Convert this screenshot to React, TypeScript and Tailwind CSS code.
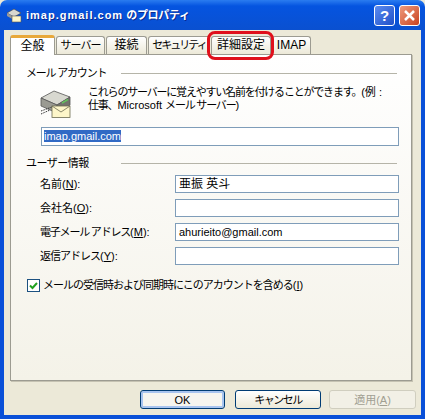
const font = '"Liberation Sans", "Noto Sans CJK JP", sans-serif';

const tabs = [
  { label: "サーバー", cls: "w-[49px] text-[11px] tracking-[-1px]" },
  { label: "接続", cls: "w-[41px] text-[12px]" },
  { label: "セキュリティ", cls: "w-[62px] text-[11px] tracking-[-2px]" },
  { label: "詳細設定", cls: "w-[60px] text-[12px]" },
  { label: "IMAP", cls: "w-[39px] text-[12px]" },
];

function MailServerIcon() {
  return (
    <svg width="32" height="32" viewBox="0 0 32 32" className="shrink-0">
      <path d="M1 12 L14 5 L30 11 L17 19 Z" fill="#d8d8d0" stroke="#555" strokeWidth="0.8" />
      <path d="M1 12 L17 19 L17 27 L1 20 Z" fill="#9a9a92" stroke="#555" strokeWidth="0.8" />
      <path d="M17 19 L30 11 L30 19 L17 27 Z" fill="#73736d" stroke="#555" strokeWidth="0.8" />
      <path d="M22 17 L28 13.500" stroke="#62c15c" strokeWidth="1.500" />
      <path d="M1 25 L12 21" stroke="#333" strokeWidth="1" strokeDasharray="1.500 1" />
      <path d="M1 28 L10 24" stroke="#333" strokeWidth="1" strokeDasharray="1.500 1" />
      <rect x="12" y="20" width="18" height="11.500" fill="#fdf6c9" stroke="#6b6b50" strokeWidth="0.8" />
      <path d="M12 20 L21 26 L30 20" fill="none" stroke="#6b6b50" strokeWidth="0.8" />
    </svg>
  );
}

function GroupTitle({ children, cls }: { children: string; cls: string }) {
  return (
    <div className="flex items-center h-[14px] pr-[2px]">
      <span className={`w-[95px] text-[11px] leading-[14px] whitespace-nowrap ${cls}`}>{children}</span>
      <div className="flex-1 h-[1px] bg-[#b5b4a8]" />
    </div>
  );
}

function Field({ label, hot, value, valueCls = "text-[11px]", labelCls = "" }: { label: string; hot: string; value?: string; valueCls?: string; labelCls?: string }) {
  return (
    <div className="flex items-center h-[18px]">
      <span className="w-[149px] pl-[14px] text-[11px] whitespace-nowrap">
        <span className={labelCls}>{label}</span>(<span className="underline">{hot}</span>):
      </span>
      <div className={`flex-1 h-[18px] bg-white border border-[#7f9db9] px-[3px] leading-[16px] whitespace-nowrap overflow-hidden ${valueCls}`}>
        {value}
      </div>
    </div>
  );
}

export default function App() {
  return (
    <div className="w-[425px] h-[419px] relative overflow-hidden bg-[#ece9d8] text-black flex flex-col" style={{ fontFamily: font }}>
      {/* タイトルバー */}
      <div className="h-[30px] shrink-0 flex items-center pl-[6px] pr-[5px] gap-[4px] rounded-t-[7px] bg-gradient-to-b from-[#2a7cf0] via-[#0554e0] via-20% to-[#0a50d0]">
        <svg width="16" height="16" viewBox="0 0 16 16" className="shrink-0">
          <path d="M1 6 L8 2 L15 6 L8 10 Z" fill="#d8d8d0" stroke="#444" strokeWidth="0.6" />
          <path d="M1 6 L8 10 L8 13 L1 9 Z" fill="#999" />
          <rect x="6" y="9" width="9" height="6" fill="#fdf6c9" stroke="#555" strokeWidth="0.6" />
        </svg>
        <span className="flex-1 text-white font-bold text-[11px] whitespace-nowrap [text-shadow:1px_1px_0_#0a2a90]">
          <span className="tracking-[1px]">imap.gmail.com</span> <span className="tracking-[-0.3px]">のプロパティ</span>
        </span>
        <div className="w-[21px] h-[21px] rounded-[3px] border border-white bg-gradient-to-br from-[#5c8cf0] to-[#1f4fc8] text-white font-bold text-[15px] leading-[19px] text-center">?</div>
        <div className="w-[21px] h-[21px] rounded-[3px] border border-white bg-gradient-to-br from-[#ee9a7c] to-[#c8401c] text-white flex items-center justify-center">
          <svg width="13" height="13" viewBox="0 0 13 13">
            <path d="M2 2 L11 11 M11 2 L2 11" stroke="white" strokeWidth="2.500" />
          </svg>
        </div>
      </div>

      {/* 本体 */}
      <div className="flex-1 min-h-0 flex flex-col border-x-[4px] border-b-[4px] border-[#0a50d8] pl-[6px] pr-[9px]">
        <div className="flex items-end h-[24px] pt-[5px] gap-[1px] shrink-0">
          <div className="w-[45px] h-[20px] bg-white border-x border-[#9c9b91] border-t-[3px] border-t-[#e8a83a] rounded-t-[3px] text-[12px] leading-[16px] text-center -mb-[1px] relative z-10">
            全般
          </div>
          {tabs.map((t) => (
            <div
              key={t.label}
              className={`${t.cls} h-[18px] bg-gradient-to-b from-white to-[#ece9d8] border-x border-t border-[#9c9b91] rounded-t-[3px] leading-[17px] text-center whitespace-nowrap`}
            >
              {t.label}
            </div>
          ))}
        </div>

        <div className="h-[327px] shrink-0 border border-[#9c9b91] shadow-[1px_1px_0_#c5c2b2] bg-gradient-to-b from-white to-[#f4f2e8] pl-[15px] pr-[12px] pt-[11px] flex flex-col">
          <GroupTitle cls="tracking-[-1.200px]">メール アカウント</GroupTitle>
          <div className="flex gap-[16px] pl-[14px] mt-[6px] h-[35px]">
            <MailServerIcon />
            <p className="text-[11px] leading-[13px] whitespace-nowrap tracking-[-1.200px]">
              これらのサーバーに覚えやすい名前を付けることができます。
              <span className="tracking-[0px]">(例 :</span>
              <br />
              仕事、<span className="tracking-[0px]">Microsoft </span>メール サーバー)
            </p>
          </div>
          <div className="ml-[15px] mt-[6px] h-[19px] bg-white border border-[#7f9db9] px-[2px] text-[11px] leading-[17px]">
            <span className="bg-[#316ac5] text-white">imap.gmail.com</span>
          </div>
          <div className="mt-[10px]">
            <GroupTitle cls="tracking-[-0.500px]">ユーザー情報</GroupTitle>
          </div>
          <div className="flex flex-col gap-[6px] mt-[5px]">
            <Field label="名前" hot="N" value="亜振 英斗" valueCls="text-[12px]" />
            <Field label="会社名" hot="O" />
            <Field label="電子メール アドレス" hot="M" value="ahurieito@gmail.com" labelCls="tracking-[-1.200px]" />
            <Field label="返信アドレス" hot="Y" labelCls="tracking-[-1px]" />
          </div>
          <div className="flex items-center gap-[3px] mt-[13px] pl-[1px] h-[14px]">
            <div className="w-[13px] h-[13px] border border-[#1c5180] bg-white flex items-center justify-center">
              <svg width="9" height="9" viewBox="0 0 9 9">
                <path d="M1 4.500 L3.500 7 L8 2" fill="none" stroke="#21a121" strokeWidth="2" />
              </svg>
            </div>
            <span className="text-[11px] whitespace-nowrap">
              <span className="tracking-[-1px]">メールの受信時および同期時にこのアカウントを含める</span>(<span className="underline">I</span>)
            </span>
          </div>
        </div>

        <div className="flex justify-end mt-[9px] -mr-[4px] text-[11px]">
          <button className="w-[85px] h-[19px] mr-[10px] rounded-[3px] border border-[#003c74] shadow-[inset_0_0_0_2px_#a8c4ef] bg-[#f6f5ef] leading-[16px]">OK</button>
          <button className="w-[86px] h-[19px] mr-[8px] rounded-[3px] border border-[#003c74] bg-gradient-to-b from-white to-[#ece9d8] leading-[16px] tracking-[-1.500px]">キャンセル</button>
          <button className="w-[87px] h-[19px] rounded-[3px] border border-[#d0cebf] bg-[#f2f0e6] text-[#a19f92] leading-[16px]">
            適用(<span className="underline">A</span>)
          </button>
        </div>
      </div>

      {/* 赤い囲み */}
      <div className="absolute left-[207px] top-[31px] w-[67px] h-[29px] border-[3px] border-[#e0101c] rounded-[8px] pointer-events-none" />
    </div>
  );
}
